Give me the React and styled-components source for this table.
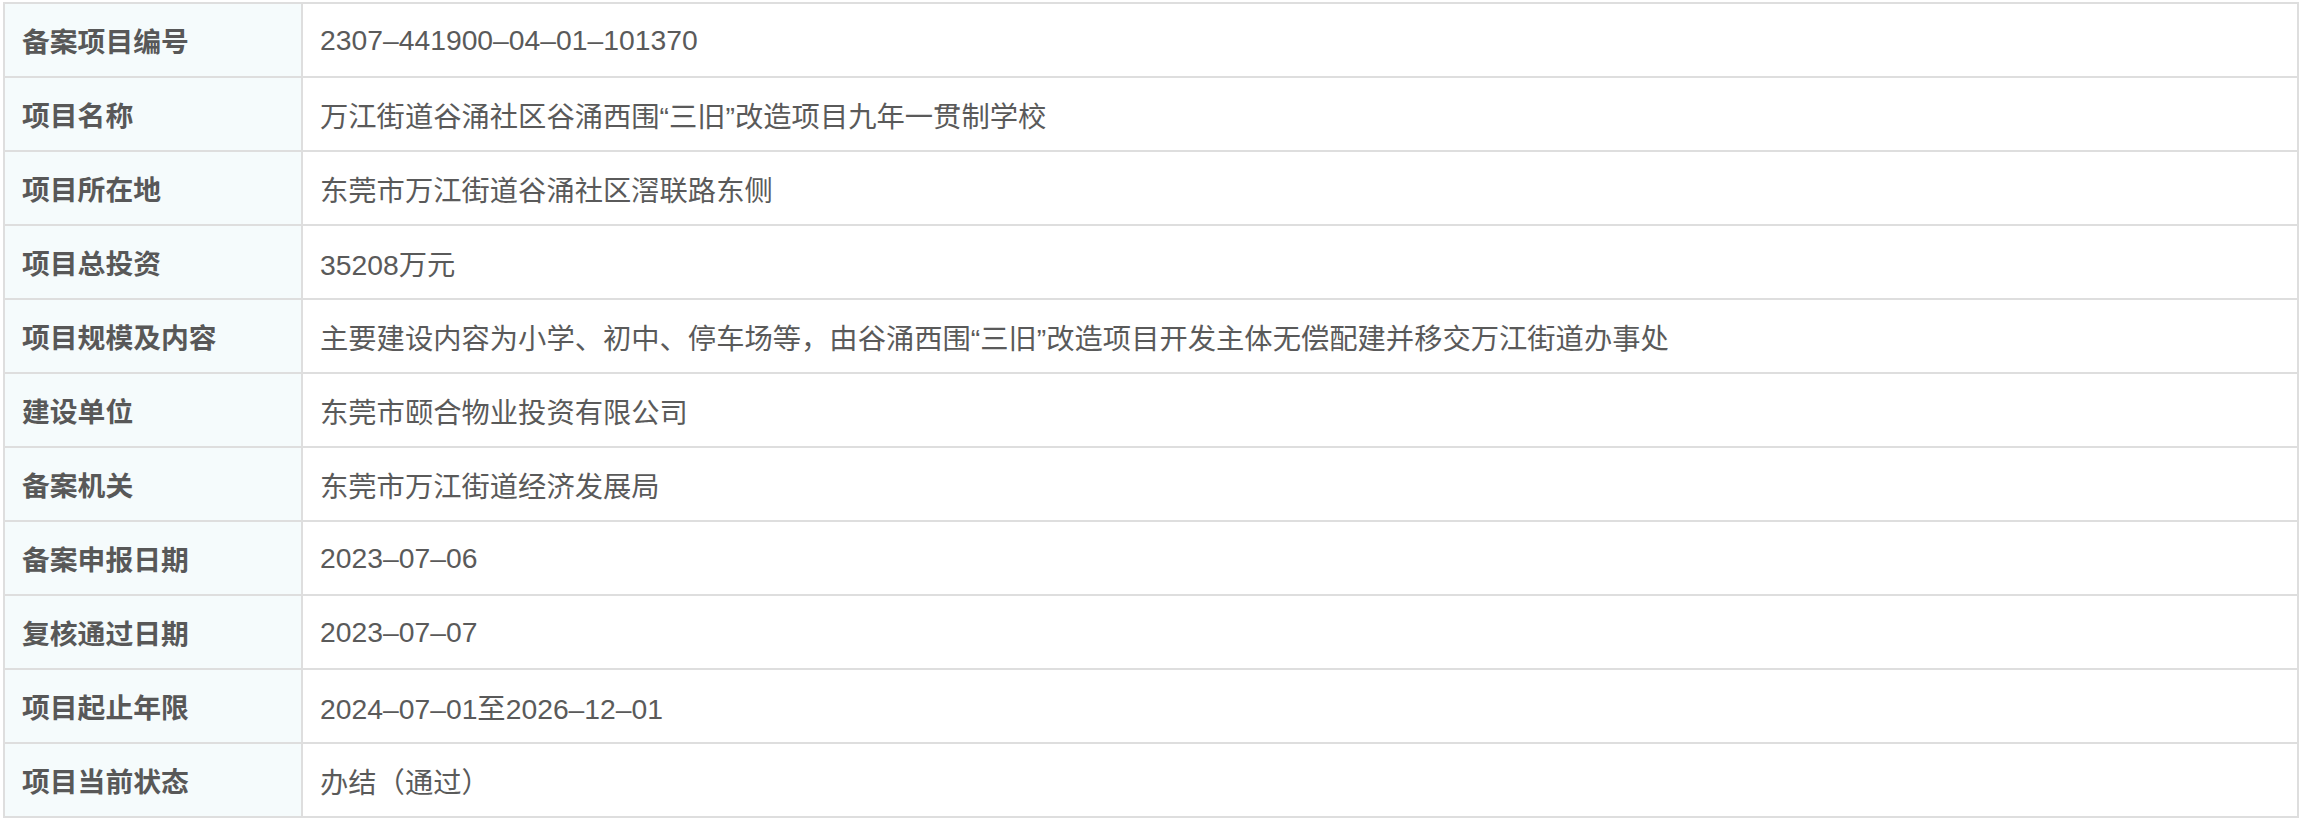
import React from "react";
import styled, { createGlobalStyle } from "styled-components";

const GlobalStyle = createGlobalStyle`
  html, body { margin: 0; padding: 0; background: #ffffff; }
  body { font-family: "Liberation Sans", "Noto Sans CJK SC", sans-serif; }
`;

const Page = styled.div`
  padding: 2px 3px 0 3px;
`;

const Table = styled.div`
  display: grid;
  grid-template-columns: 298px 1fr;
  width: 2296px;
  box-sizing: border-box;
  border-top: 2px solid #dedede;
  border-left: 2px solid #dedede;
`;

const Cell = styled.div`
  box-sizing: border-box;
  height: 74px;
  display: flex;
  align-items: center;
  padding: 0 16px 0 17px;
  border-right: 2px solid #dedede;
  border-bottom: 2px solid #dedede;
  white-space: nowrap;
  font-family: "Liberation Sans", "Noto Sans CJK SC", sans-serif;
  background: ${(p) => (p.$label ? "#f5fbfc" : "#ffffff")};
  color: ${(p) => (p.$label ? "#585858" : "#5a5a5a")};
  font-size: ${(p) => (p.$label ? "27.8px" : "28.3px")};
  font-weight: ${(p) => (p.$label ? 700 : 400)};
`;

const rows = [
  ["备案项目编号", "2307–441900–04–01–101370"],
  ["项目名称", "万江街道谷涌社区谷涌西围“三旧”改造项目九年一贯制学校"],
  ["项目所在地", "东莞市万江街道谷涌社区滘联路东侧"],
  ["项目总投资", "35208万元"],
  ["项目规模及内容", "主要建设内容为小学、初中、停车场等，由谷涌西围“三旧”改造项目开发主体无偿配建并移交万江街道办事处"],
  ["建设单位", "东莞市颐合物业投资有限公司"],
  ["备案机关", "东莞市万江街道经济发展局"],
  ["备案申报日期", "2023–07–06"],
  ["复核通过日期", "2023–07–07"],
  ["项目起止年限", "2024–07–01至2026–12–01"],
  ["项目当前状态", "办结（通过）"],
];

export default function App() {
  return (
    <Page>
      <GlobalStyle />
      <Table>
        {rows.map(([k, v]) => (
          <React.Fragment key={k}>
            <Cell $label>{k}</Cell>
            <Cell>{v}</Cell>
          </React.Fragment>
        ))}
      </Table>
    </Page>
  );
}
